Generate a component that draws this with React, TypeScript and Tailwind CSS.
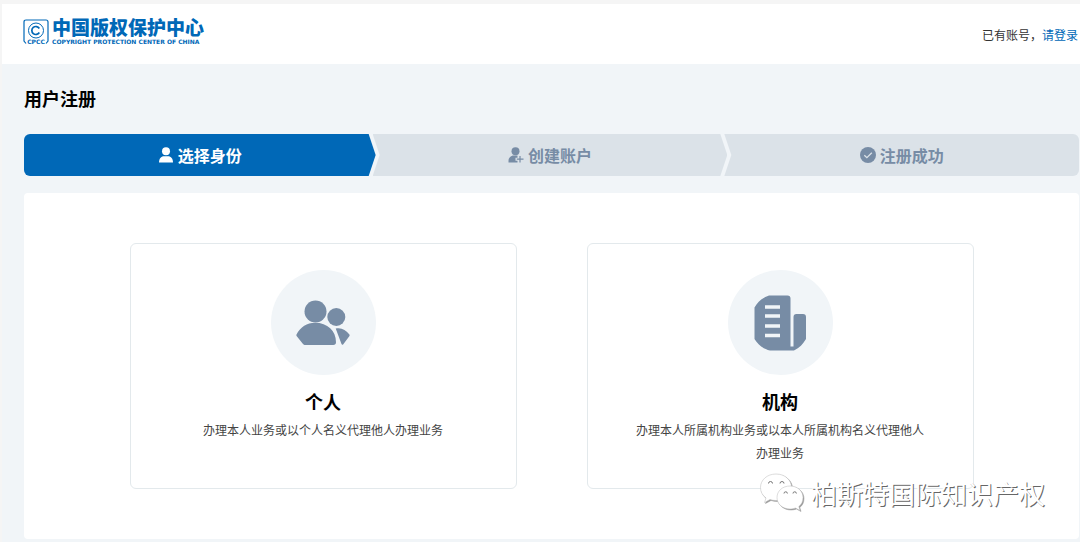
import type { ReactNode } from 'react';

const UserIcon = () => (
  <svg viewBox="0 0 16 16" className="h-4 w-4" fill="currentColor" aria-hidden="true">
    <circle cx="8" cy="4.2" r="4" />
    <path d="M1 15.500c0-4 2-6.300 5-6.300h4c3 0 5 2.300 5 6.300z" />
  </svg>
);

const UserAddIcon = () => (
  <svg viewBox="0 0 16 16" className="h-4 w-4" aria-hidden="true">
    <circle cx="7.500" cy="4.200" r="4" fill="currentColor" />
    <path d="M.5 15.500v-1.500c0-3 2-5.500 5.500-5.500h3.500v2.200H7.500v3h2v1.800z" fill="currentColor" />
    <path d="M12 9v6.500M8.800 12.200h6.700" stroke="currentColor" strokeWidth="1.200" />
  </svg>
);

const CheckIcon = () => (
  <svg viewBox="0 0 16 16" className="h-4 w-4" aria-hidden="true">
    <circle cx="8" cy="8" r="8" fill="currentColor" />
    <path d="M4.300 8.200l2.600 2.500 4.900-4.900" fill="none" stroke="#dbe2e8" strokeWidth="1.300" />
  </svg>
);

const PeopleIcon = () => (
  <svg viewBox="0 0 54 46" className="h-[46px] w-[54px]" fill="currentColor" aria-hidden="true">
    <circle cx="19.500" cy="11.500" r="11" />
    <circle cx="40.300" cy="17" r="9" />
    <path d="M.5 34.500C4.500 27 11 22.800 19 22.800c12.500 0 21 8 21 19.500 0 1.700-1 2.700-2.700 2.700H9.500c-1.300 0-2-.4-2.700-1.300L1 36.500c-.6-.8-.8-1.300-.5-2z" />
    <path d="M39.700 28.500c5.300-1.300 10.300 1.200 13.700 6 .4.700.3 1.100-.1 1.700l-6 8c-.6.900-1.400.8-1.800-.2z" />
  </svg>
);

const BuildingIcon = () => (
  <svg viewBox="0 0 52 56" className="h-14 w-[52px]" aria-hidden="true">
    <path
      d="M15 .500h18.500c2 0 3 1 3 3v48h3V22c0-2 1-3 3-3H49c2 0 3 1 3 3v22c-3 5-6.500 9-12 11.500H16C9 54 4 49.500.500 44V12.500C4 6.500 9 2.500 15 .500z"
      fill="currentColor"
    />
    <path d="M11 12h15M11 21h15M11 31h15M11 40.500h15" stroke="#f1f5f8" strokeWidth="3.600" />
  </svg>
);

const Logo = () => (
  <a href="#" className="mb-1 flex items-center gap-[3px] text-[#0068b7]" aria-label="中国版权保护中心">
    <svg viewBox="0 0 26 26" className="h-[26px] w-[26px]" fill="none" stroke="currentColor" aria-hidden="true">
      <path d="M3 24.500L1 22V3q0-2 2-2h20q2 0 2 2v19l-2 2.500" strokeWidth="1.200" />
      <circle cx="13" cy="11.500" r="7.500" strokeWidth="1" />
      <path d="M16.300 9.500a4 4 0 1 0 0 4" strokeWidth="1.700" />
      <text x="13" y="25.300" textAnchor="middle" fontSize="6" fontWeight="700" fill="currentColor" stroke="none" fontFamily="DejaVu Sans, sans-serif">
        CPCC
      </text>
    </svg>
    <span className="flex flex-col gap-1">
      <span className="text-[19px] leading-4 font-black">中国版权保护中心</span>
      <span className="font-['DejaVu_Sans',sans-serif] text-[6px] leading-[6px] font-bold whitespace-nowrap">
        COPYRIGHT PROTECTION CENTER OF CHINA
      </span>
    </span>
  </a>
);

const steps = [
  {
    title: '选择身份',
    icon: <UserIcon />,
    style: 'bg-[#0068b7] text-white [clip-path:polygon(0_0,calc(100%-7px)_0,100%_50%,calc(100%-7px)_100%,0_100%)]',
  },
  {
    title: '创建账户',
    icon: <UserAddIcon />,
    style:
      '-ml-[3px] bg-[#dbe2e8] text-[#778ca5] [clip-path:polygon(0_0,calc(100%-7px)_0,100%_50%,calc(100%-7px)_100%,0_100%,7px_50%)]',
  },
  {
    title: '注册成功',
    icon: <CheckIcon />,
    style: '-ml-[3px] bg-[#dbe2e8] text-[#778ca5] [clip-path:polygon(0_0,100%_0,100%_100%,0_100%,7px_50%)]',
  },
];

type IdentityCardProps = {
  title: string;
  description: string;
  icon: ReactNode;
};

const IdentityCard = ({ title, description, icon }: IdentityCardProps) => (
  <button
    type="button"
    className="flex min-h-[246px] flex-1 flex-col items-center rounded-md border border-[#e3e9ec] bg-white px-11 pt-[26px] pb-6"
  >
    <span className="flex h-[105px] w-[105px] items-center justify-center rounded-full bg-[#f1f5f8] text-[#778ca5]">
      {icon}
    </span>
    <span className="mt-3.5 text-lg leading-6 font-bold text-black">{title}</span>
    <span className="mt-[5px] text-xs leading-[23px] text-[#444]">{description}</span>
  </button>
);

const Watermark = () => (
  <div className="pointer-events-none absolute right-[34px] bottom-[26px] flex items-center gap-1.5">
    <svg viewBox="0 0 46 40" className="h-10 w-[46px] drop-shadow-[1px_1px_0_#999]" fill="#fff" stroke="#bbb" strokeWidth=".5" aria-hidden="true">
      <path d="M17 1C8 1 1.500 7 1.500 14.500c0 4.500 2 8 5.500 10.500l-1.500 4.500 5.500-3c2 .7 4 1 6 1 9 0 15.500-5.500 15.500-13S26 1 17 1z" />
      <path d="M31 13c-7.500 0-13 5-13 11.500S23.500 36 31 36c2 0 4-.4 5.500-1l4.500 2.500-1.200-4c2.700-2.100 4.200-5 4.200-9C44 18 38.500 13 31 13z" />
      <path d="M9.500 10.500a2 2 0 0 1 4 0M21 10.500a2 2 0 0 1 4 0M25 20.500a1.700 1.700 0 0 1 3.400 0M34 20.500a1.700 1.700 0 0 1 3.400 0" fill="none" stroke="#777" strokeWidth="1" />
    </svg>
    <span className="text-[26px] leading-9 text-white [text-shadow:1px_1px_0_#666]">柏斯特国际知识产权</span>
  </div>
);

const App = () => {
  return (
    <div className="min-h-screen bg-[#f5f5f5] pt-1 pl-0.5 font-['Noto_Sans_CJK_SC',sans-serif]">
      <div className="min-h-[calc(100vh-4px)] bg-[#f1f5f8]">
        <header className="flex h-[60px] items-center justify-between bg-white pr-0.5 pl-[21px]">
          <Logo />
          <p className="pt-0.5 text-xs text-[#333]">
            已有账号，
            <a href="#" className="text-[#0068b7]">请登录</a>
          </p>
        </header>

        <main className="pr-px pb-[3px] pl-[22px]">
          <h1 className="pt-5 text-lg leading-7 font-bold text-black">用户注册</h1>

          <ol className="mt-[22px] grid grid-cols-3 overflow-hidden rounded-md">
            {steps.map((step) => (
              <li key={step.title} className={`flex h-[42px] items-center justify-center gap-1 font-bold ${step.style}`}>
                {step.icon}
                <span>{step.title}</span>
              </li>
            ))}
          </ol>

          <section className="relative mt-[17px] rounded bg-white px-[10%] py-[50px]">
            <div className="flex gap-[70px]">
              <IdentityCard title="个人" description="办理本人业务或以个人名义代理他人办理业务" icon={<PeopleIcon />} />
              <IdentityCard
                title="机构"
                description="办理本人所属机构业务或以本人所属机构名义代理他人办理业务"
                icon={<BuildingIcon />}
              />
            </div>
            <Watermark />
          </section>
        </main>
      </div>
    </div>
  );
};

export default App;
